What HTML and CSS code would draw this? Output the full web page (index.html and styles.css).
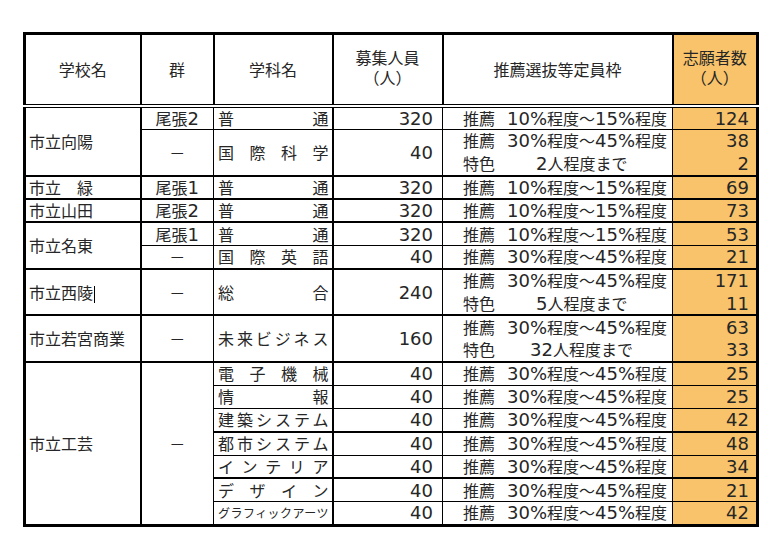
FILE: index.html
```html
<!DOCTYPE html>
<html lang="ja">
<head>
<meta charset="utf-8">
<title>志願者数</title>
<link rel="stylesheet" href="styles.css">
</head>
<body>
<table class="tbl">
  <colgroup>
    <col class="c1"><col class="c2"><col class="c3"><col class="c4"><col class="c5"><col class="c6">
  </colgroup>
  <thead>
    <tr class="head">
      <th>学校名</th>
      <th>群</th>
      <th>学科名</th>
      <th class="two"><span class="ln">募集人員</span><span class="ln">（人）</span></th>
      <th>推薦選抜等定員枠</th>
      <th class="two hl"><span class="ln">志願者数</span><span class="ln">（人）</span></th>
    </tr>
  </thead>
  <tbody>
    <tr class="grp">
      <td class="sch" rowspan="3">市立向陽</td>
      <td class="gun">尾張<span class="n">2</span></td>
      <td class="dep">普通</td>
      <td class="num">320</td>
      <td class="sel"><span class="k">推薦</span><span class="n">10%</span>程度～<span class="n">15%</span>程度</td>
      <td class="num hl">124</td>
    </tr>
    <tr>
      <td class="gun" rowspan="2">－</td>
      <td class="dep" rowspan="2">国際科学</td>
      <td class="num" rowspan="2">40</td>
      <td class="sel"><span class="k">推薦</span><span class="n">30%</span>程度～<span class="n">45%</span>程度</td>
      <td class="num hl">38</td>
    </tr>
    <tr class="sub">
      <td class="sel"><span class="k">特色</span><span class="cap1"><span class="n">2</span>人程度まで</span></td>
      <td class="num hl">2</td>
    </tr>
    <tr class="grp">
      <td class="sch">市立　緑</td>
      <td class="gun">尾張<span class="n">1</span></td>
      <td class="dep">普通</td>
      <td class="num">320</td>
      <td class="sel"><span class="k">推薦</span><span class="n">10%</span>程度～<span class="n">15%</span>程度</td>
      <td class="num hl">69</td>
    </tr>
    <tr class="grp">
      <td class="sch">市立山田</td>
      <td class="gun">尾張<span class="n">2</span></td>
      <td class="dep">普通</td>
      <td class="num">320</td>
      <td class="sel"><span class="k">推薦</span><span class="n">10%</span>程度～<span class="n">15%</span>程度</td>
      <td class="num hl">73</td>
    </tr>
    <tr class="grp">
      <td class="sch" rowspan="2">市立名東</td>
      <td class="gun">尾張<span class="n">1</span></td>
      <td class="dep">普通</td>
      <td class="num">320</td>
      <td class="sel"><span class="k">推薦</span><span class="n">10%</span>程度～<span class="n">15%</span>程度</td>
      <td class="num hl">53</td>
    </tr>
    <tr>
      <td class="gun">－</td>
      <td class="dep">国際英語</td>
      <td class="num">40</td>
      <td class="sel"><span class="k">推薦</span><span class="n">30%</span>程度～<span class="n">45%</span>程度</td>
      <td class="num hl">21</td>
    </tr>
    <tr class="grp">
      <td class="sch" rowspan="2">市立西陵<span class="caret"></span></td>
      <td class="gun" rowspan="2">－</td>
      <td class="dep" rowspan="2">総合</td>
      <td class="num" rowspan="2">240</td>
      <td class="sel"><span class="k">推薦</span><span class="n">30%</span>程度～<span class="n">45%</span>程度</td>
      <td class="num hl">171</td>
    </tr>
    <tr class="sub">
      <td class="sel"><span class="k">特色</span><span class="cap1"><span class="n">5</span>人程度まで</span></td>
      <td class="num hl">11</td>
    </tr>
    <tr class="grp">
      <td class="sch" rowspan="2">市立若宮商業</td>
      <td class="gun" rowspan="2">－</td>
      <td class="dep" rowspan="2">未来ビジネス</td>
      <td class="num" rowspan="2">160</td>
      <td class="sel"><span class="k">推薦</span><span class="n">30%</span>程度～<span class="n">45%</span>程度</td>
      <td class="num hl">63</td>
    </tr>
    <tr class="sub">
      <td class="sel"><span class="k">特色</span><span class="cap2"><span class="n">32</span>人程度まで</span></td>
      <td class="num hl">33</td>
    </tr>
    <tr class="grp">
      <td class="sch" rowspan="7">市立工芸</td>
      <td class="gun" rowspan="7">－</td>
      <td class="dep">電子機械</td>
      <td class="num">40</td>
      <td class="sel"><span class="k">推薦</span><span class="n">30%</span>程度～<span class="n">45%</span>程度</td>
      <td class="num hl">25</td>
    </tr>
    <tr>
      <td class="dep">情報</td>
      <td class="num">40</td>
      <td class="sel"><span class="k">推薦</span><span class="n">30%</span>程度～<span class="n">45%</span>程度</td>
      <td class="num hl">25</td>
    </tr>
    <tr>
      <td class="dep">建築システム</td>
      <td class="num">40</td>
      <td class="sel"><span class="k">推薦</span><span class="n">30%</span>程度～<span class="n">45%</span>程度</td>
      <td class="num hl">42</td>
    </tr>
    <tr class="mid">
      <td class="dep">都市システム</td>
      <td class="num">40</td>
      <td class="sel"><span class="k">推薦</span><span class="n">30%</span>程度～<span class="n">45%</span>程度</td>
      <td class="num hl">48</td>
    </tr>
    <tr>
      <td class="dep">インテリア</td>
      <td class="num">40</td>
      <td class="sel"><span class="k">推薦</span><span class="n">30%</span>程度～<span class="n">45%</span>程度</td>
      <td class="num hl">34</td>
    </tr>
    <tr class="mid">
      <td class="dep">デザイン</td>
      <td class="num">40</td>
      <td class="sel"><span class="k">推薦</span><span class="n">30%</span>程度～<span class="n">45%</span>程度</td>
      <td class="num hl">21</td>
    </tr>
    <tr>
      <td class="dep small">グラフィックアーツ</td>
      <td class="num">40</td>
      <td class="sel"><span class="k">推薦</span><span class="n">30%</span>程度～<span class="n">45%</span>程度</td>
      <td class="num hl">42</td>
    </tr>
  </tbody>
</table>
</body>
</html>
```
FILE: styles.css
```css
html, body {
  margin: 0;
  padding: 0;
  background: #ffffff;
}

.tbl {
  margin: 32px 0 0 23px;
  width: 736px;
  table-layout: fixed;
  border-collapse: collapse;
  border: 3px solid #000;
  font-family: "DejaVu Sans", "Noto Sans CJK JP", sans-serif;
  font-size: 16px;
  color: #262626;
}

.c1 { width: 116px; }
.c2 { width: 73px; }
.c3 { width: 119px; }
.c4 { width: 110px; }
.c5 { width: 230px; }
.c6 { width: 85px; }

.tbl th,
.tbl td {
  border: 1px solid #000;
  padding: 0;
  line-height: 21px;
  white-space: nowrap;
  overflow: hidden;
}

.tbl th {
  font-weight: normal;
  font-family: "Noto Sans CJK JP", sans-serif;
  text-align: center;
  vertical-align: middle;
  border-left-width: 2px;
}

.head {
  height: 72px;
}

.head th {
  border-bottom: 4px double #000;
}

.tbl th.two {
  padding-bottom: 4px;
}

.ln {
  display: block;
  height: 20px;
  line-height: 20px;
}

.tbl tbody tr {
  height: 23.3px;
}

.tbl td {
  vertical-align: middle;
}

.tbl tr.grp td {
  border-top: 2px solid #000;
}

.tbl tr.mid td {
  border-top: 2px solid #000;
}

.tbl tr.sub td {
  border-top-style: hidden;
}

.sch {
  text-align: left;
  padding-left: 3px !important;
  border-right: 2px solid #000 !important;
  font-family: "Noto Sans CJK JP", sans-serif;
}

.gun {
  text-align: center;
  font-family: "Noto Sans CJK JP", sans-serif;
}

.dep {
  font-family: "Noto Sans CJK JP", sans-serif;
  padding: 0 3px 0 4px !important;
  text-align: justify;
  text-align-last: justify;
  border-right: 2px solid #000 !important;
}

.dep.small {
  font-size: 12px;
}

.num {
  text-align: right;
  font-size: 18px;
  padding-right: 9px !important;
}

.num.hl {
  padding-right: 7px !important;
}

.hl {
  background: #f8c36a;
}

.sel {
  padding-left: 20px !important;
  font-family: "Noto Sans CJK JP", sans-serif;
}

.n {
  font-family: "DejaVu Sans", sans-serif;
  font-size: 18px;
}

.k {
  margin-right: 12px;
}

.cap1 {
  margin-left: 29px;
}

.cap2 {
  margin-left: 23px;
}

.caret {
  display: inline-block;
  width: 1px;
  height: 17px;
  background: #000;
  vertical-align: middle;
  margin-left: 1px;
}
```
